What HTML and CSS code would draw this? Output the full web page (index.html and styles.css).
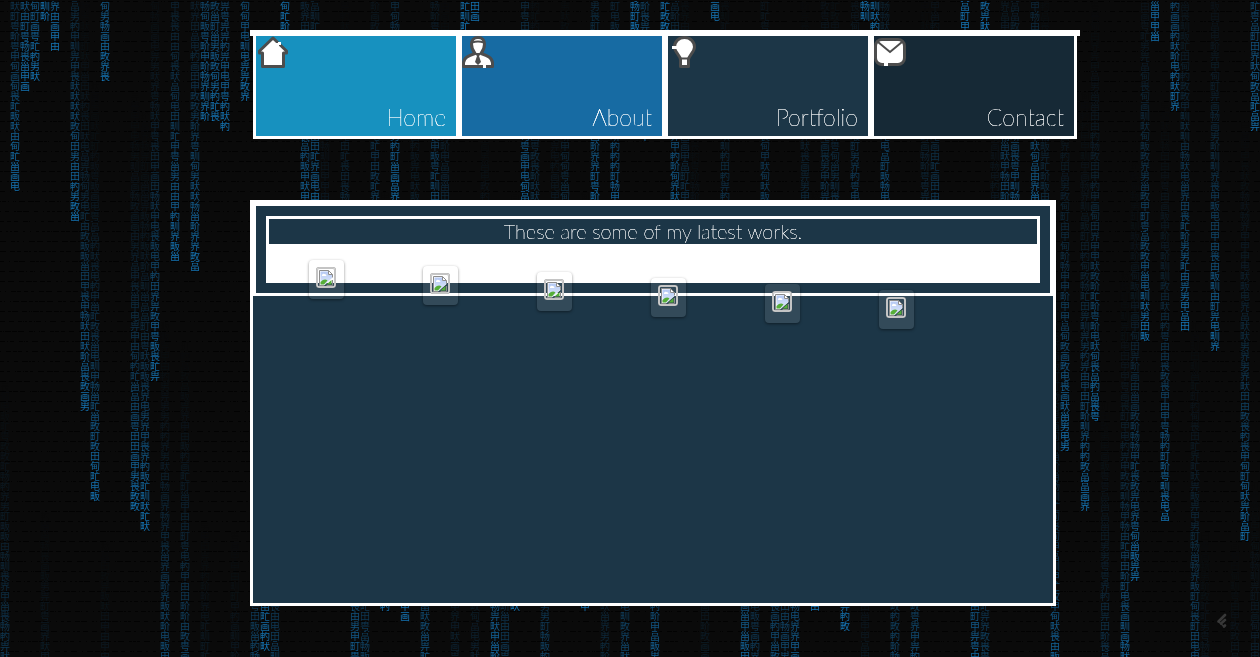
FILE: index.html
```html
<!DOCTYPE html>
<html lang="en">
<head>
<meta charset="utf-8">
<title>Portfolio</title>
<link rel="stylesheet" href="styles.css">
</head>
<body>
<canvas class="rain" aria-hidden="true"></canvas>
<div class="page">
  <nav class="menu">
    <a class="tile tile-home" href="#home">
      <svg class="tile-icon" viewBox="0 0 32 32" aria-hidden="true"><path d="M17 2 L3.500 15 V17 H6.500 V30.500 H27.500 V17 H30.500 V15 Z" fill="#fff" stroke="#4d4d4d" stroke-width="3" stroke-linejoin="round"/><path d="M20 7h2v-1h3v3h-2v2h-3z" fill="#fff"/></svg>
      <span>Home</span>
    </a>
    <a class="tile tile-about" href="#about">
      <svg class="tile-icon" viewBox="0 0 32 32" aria-hidden="true"><path d="M16 1.500 C11.500 1.500 9.500 4.500 9.500 8 C9.500 12 11 15 13 17.500 C7 19.500 1.500 21.500 1.500 27 V30.500 H30.500 V27 C30.500 21.500 25 19.500 19 17.500 C21 15 22.500 12 22.500 8 C22.500 4.500 20.500 1.500 16 1.500 Z" fill="#fff" stroke="#4d4d4d" stroke-width="3" stroke-linejoin="round"/><path d="M10 6.500q6 -2 12 0" fill="none" stroke="#4d4d4d" stroke-width="2"/><path d="M14 17h4v2l-1 1l2 6l-3 3l-3-3l2-6l-1-1z" fill="#4d4d4d"/><path d="M21 29h3v3h-3z" fill="#fff"/></svg>
      <span>About</span>
    </a>
    <a class="tile tile-portfolio" href="#portfolio">
      <svg class="tile-icon" viewBox="0 0 32 32" aria-hidden="true"><path d="M16.500 1.500 C10.500 1.500 6.500 6 6.500 11 C6.500 16 12 19 12.500 23.500 V30.500 H20.500 V23.500 C21 19 26.500 16 26.500 11 C26.500 6 22.500 1.500 16.500 1.500 Z" fill="#fff" stroke="#4d4d4d" stroke-width="3" stroke-linejoin="round"/><path d="M12 22.500h9M13 30h7M13 24v6M20 24v6" stroke="#4d4d4d" stroke-width="2"/><path d="M4 10h5v3h-5z" fill="#fff"/></svg>
      <span>Portfolio</span>
    </a>
    <a class="tile tile-contact" href="#contact">
      <svg class="tile-icon" viewBox="0 0 32 32" aria-hidden="true"><rect x="1.500" y="3.500" width="29" height="25" rx="6.500" fill="#fff" stroke="#4d4d4d" stroke-width="3"/><path d="M4 6l12 10l12 -10" fill="none" stroke="#4d4d4d" stroke-width="2"/><path d="M10 27h4v3h-4z" fill="#fff"/></svg>
      <span>Contact</span>
    </a>
  </nav>

  <main class="panel">
    <section class="works">
      <div class="works-frame">
        <p class="works-title">These are some of my latest works.</p>
        <ul class="gallery">
          <li class="card"><svg class="thumb" viewBox="0 0 20 21" role="img" aria-label="Work 1"><use href="#missing"/></svg></li>
          <li class="card"><svg class="thumb" viewBox="0 0 20 21" role="img" aria-label="Work 2"><use href="#missing"/></svg></li>
          <li class="card"><svg class="thumb" viewBox="0 0 20 21" role="img" aria-label="Work 3"><use href="#missing"/></svg></li>
          <li class="card"><svg class="thumb" viewBox="0 0 20 21" role="img" aria-label="Work 4"><use href="#missing"/></svg></li>
          <li class="card"><svg class="thumb" viewBox="0 0 20 21" role="img" aria-label="Work 5"><use href="#missing"/></svg></li>
          <li class="card"><svg class="thumb" viewBox="0 0 20 21" role="img" aria-label="Work 6"><use href="#missing"/></svg></li>
        </ul>
      </div>
    </section>
  </main>
</div>

<svg class="badge" viewBox="0 0 10 16" aria-hidden="true"><path d="M1.500 8.500L8 2M4 10.500L8 7M7 13.500L8 12.500" stroke="#383838" stroke-width="2.600" stroke-linecap="round"/><path d="M1.500 8.500L7.500 14" stroke="#383838" stroke-width="1.500"/></svg>

<svg class="defs" width="0" height="0" aria-hidden="true">
  <defs>
    <linearGradient id="sky" x1="0" y1="0" x2="0" y2="1"><stop offset="0" stop-color="#b5c9f4"/><stop offset="1" stop-color="#dfe9fb"/></linearGradient>
    <g id="missing">
      <rect x="1" y="1" width="18" height="19" rx="2" fill="none" stroke="#a8a8a8" stroke-width="2"/>
      <rect x="1" y="1" width="18" height="19" rx="2" fill="none" stroke="#e0e0e0" stroke-width="1"/>
      <path d="M3.500 3.500H12.500L16.500 7.500V11L8 18.500H3.500Z" fill="#fff"/>
      <path d="M4.500 4.500H12V8H16V11L9 17.500H4.500Z" fill="url(#sky)"/>
      <path d="M6 9V8q1-2 2.500-1q2 0 2 2Z" fill="#fff"/>
      <path d="M4.500 17.500V15q4-4 7-1.500L8 17.500Z" fill="#55ae38"/>
      <path d="M10.500 17.500L15.500 13V17.500Z" fill="#55ae38"/>
      <path d="M8 18.500H3.500V3.500H12.500L16.500 7.500V10.500M12.500 3.500V7.500H16.500M10.500 18.500H16.500V13" fill="none" stroke="#8d8d8d"/>
    </g>
  </defs>
</svg>
<script src="rain.js"></script>
</body>
</html>
```

FILE: styles.css
```css
* {
  box-sizing: border-box;
}

body {
  margin: 0;
  min-height: 100vh;
  background: #0a0a0a;
  color: #fff;
  font-family: Lato, "Noto Sans CJK SC", sans-serif;
  font-weight: 100;
  text-shadow: 0 0 0 #fff, 0 0 0 #fff;
  overflow: hidden;
}

.rain {
  position: fixed;
  inset: 0;
  z-index: -1;
}

.page {
  max-width: 1080px;
  padding: 30px 0 50px 250px;
}

.menu {
  display: grid;
  grid-template-columns: repeat(4, 1fr);
  padding: 0 3px;
  border-top: 6px solid #fff;
}

.tile {
  display: flex;
  flex-direction: column;
  justify-content: space-between;
  border: 3px solid #fff;
  border-top: 0;
  color: #fff;
  font-size: 23px;
  line-height: 28px;
  text-decoration: none;
}

.tile span {
  padding: 0 10px 5px;
  text-align: right;
}

.tile-icon {
  width: 32px;
  height: 32px;
  margin-bottom: 35px;
}

.tile-home { background: #1791bf; }
.tile-about { background: #176ba3; }
.tile-portfolio { background: #1c3647; }
.tile-contact { background: #162936; }

.panel {
  min-height: 406px;
  margin: 61px 24px 0 0;
  border: 3px solid #fff;
  background: #1c3647;
}

.works {
  padding: 10px;
  border: 3px solid #fff;
}

.works-frame {
  border: 3px solid #fff;
  background: #fff;
}

.works-title {
  margin: 0;
  background: #1c3647;
  font-size: 20px;
  line-height: 25px;
  text-align: center;
}

.gallery {
  display: flex;
  gap: 79px;
  height: 36px;
  margin: 0;
  padding: 16px 0 0 40px;
  list-style: none;
}

.card {
  flex: none;
  width: 35px;
  height: 39px;
  padding: 7px;
  border-radius: 4px;
  background: rgba(255, 255, 255, 0.1);
  box-shadow: 0 1px 3px rgba(0, 0, 0, 0.45);
}

.card:nth-child(2) { margin-top: 6px; }
.card:nth-child(3) { margin-top: 12px; }
.card:nth-child(4) { margin-top: 18px; }
.card:nth-child(5) { margin-top: 24px; }
.card:nth-child(6) { margin-top: 30px; }

.thumb {
  display: block;
  width: 20px;
  height: 21px;
}

.badge {
  position: fixed;
  right: 33px;
  bottom: 28px;
  width: 10px;
  height: 16px;
}

.defs {
  position: absolute;
}
```

FILE: rain.js
```js
const canvas = document.querySelector('.rain');
const ctx = canvas.getContext('2d');
const size = 10;
const glyphs = '田由甲申电男甸甹町画甽甾甿畀畃畅畈畋界畍畎畏畐';

// Lowest glyph of each stream, keyed by column left edge.
const streams = {
  0: [800], 10: [190], 20: [90], 30: [80], 40: [20, 930], 50: [50], 70: [220], 80: [410],
  90: [500], 100: [80, 960], 130: [510], 140: [530], 150: [380], 160: [740], 170: [260],
  180: [760], 190: [270], 200: [120, 940], 210: [120], 220: [130], 230: [950], 240: [100],
  250: [770], 260: [650], 270: [780], 280: [30], 300: [240], 310: [240], 320: [490],
  340: [410], 350: [700], 360: [780], 370: [330], 380: [610], 390: [210], 400: [620],
  410: [460], 420: [730], 430: [300], 440: [410], 450: [900], 460: [30], 470: [20, 900],
  480: [530], 490: [680], 500: [800], 510: [610], 520: [220], 530: [370], 540: [780],
  550: [490], 560: [390], 580: [610], 590: [220], 600: [860], 610: [240], 620: [760],
  630: [30], 640: [140], 650: [700], 660: [30], 670: [240], 680: [370], 690: [530],
  700: [930], 710: [20], 720: [370], 740: [690], 750: [800], 760: [330], 770: [740],
  780: [750], 790: [700], 800: [410], 810: [610], 820: [350], 830: [370], 840: [630],
  850: [330], 860: [20, 950], 870: [40], 880: [270], 890: [770], 910: [740], 920: [410],
  930: [350], 960: [30], 970: [690], 980: [30, 780], 990: [490], 1000: [300], 1010: [270],
  1030: [240], 1040: [390], 1050: [690], 1060: [450], 1080: [510], 1090: [420],
  1100: [820], 1120: [690], 1130: [580], 1140: [340], 1150: [40], 1160: [520],
  1170: [110], 1180: [330], 1190: [740], 1200: [950], 1210: [350], 1230: [960],
  1240: [540], 1250: [130, 900]
};

let seed = 7;
function random() {
  seed = (seed * 16807) % 2147483647;
  return seed / 2147483647;
}

function draw() {
  seed = 7;
  canvas.width = window.innerWidth;
  canvas.height = window.innerHeight;
  ctx.fillStyle = '#0a0a0a';
  ctx.fillRect(0, 0, canvas.width, canvas.height);
  ctx.font = size + 'px "Liberation Sans", "Noto Sans CJK SC", sans-serif';

  for (const [left, heads] of Object.entries(streams)) {
    for (let y = size; y < canvas.height + size; y += size) {
      const head = heads.find((h) => h >= y);
      if (head === undefined) break;
      const strength = (Math.pow(0.96, (head - y) / size) - 0.18) / 0.82;
      if (strength <= 0) continue;
      ctx.fillStyle = `rgba(20, 116, 180, ${strength})`;
      ctx.fillText(glyphs[Math.floor(random() * glyphs.length)], Number(left), y);
    }
  }

  // Broken scan lines between the glyph rows.
  ctx.fillStyle = 'rgba(0, 0, 0, 0.8)';
  for (let y = 1; y < canvas.height; y += size) {
    let x = 0;
    while (x < canvas.width) {
      const dash = 1 + Math.floor(random() * 6);
      ctx.fillRect(x, y, dash, 1);
      x += dash + 1 + Math.floor(random() * 5);
    }
  }
}

draw();
window.addEventListener('resize', draw);
```
